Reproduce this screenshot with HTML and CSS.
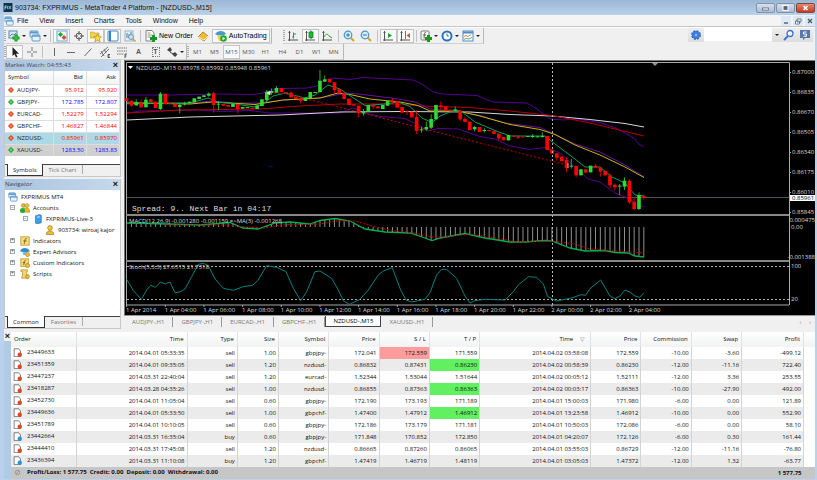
FILE: index.html
```html
<!DOCTYPE html>
<html lang="en">
<head>
<meta charset="utf-8">
<title>903734: FXPRIMUS - MetaTrader 4 Platform - [NZDUSD-,M15]</title>
<link rel="stylesheet" href="styles.css">
</head>
<body>
<svg class="defs" aria-hidden="true">
  <symbol id="windows" viewBox="0 0 12 12"><rect x="1" y="1" width="8" height="6" rx="1" fill="#e8f3fc" stroke="#5b9bd0"/><path d="M1 2.5h8" stroke="#5b9bd0" stroke-width="2"/><rect x="3" y="5" width="8" height="6" rx="1" fill="#e8f3fc" stroke="#5b9bd0"/><path d="M3 6h8" stroke="#5b9bd0" stroke-width="1.5"/></symbol>
  <symbol id="plus" viewBox="0 0 12 12"><rect x="1" y="1" width="8" height="7" fill="#d9e9f6" stroke="#5685ad"/><path d="M2 6l2-2 2 1 2-2" fill="none" stroke="#5685ad"/><path d="M8 4.500v7M4.500 8h7" stroke="#129a1c" stroke-width="3"/><path d="M8 5.500v5M5.500 8h5" stroke="#3fd34b" stroke-width="1"/></symbol>
  <symbol id="market" viewBox="0 0 12 12"><rect x="1" y="1" width="10" height="10" fill="#f3faff" stroke="#6ba5d8"/><path d="M2 4.500L4.500 2l2.500 2.500-2.500 2.500z" fill="#18a82a"/><path d="M5.500 7.500l2.500-2.500 2.500 2.500-2.500 2.500z" fill="#e04a20"/></symbol>
  <symbol id="cross" viewBox="0 0 12 12"><circle cx="6" cy="6" r="3" fill="none" stroke="#555"/><path d="M6 1v4M6 7v4M1 6h4M7 6h4" stroke="#555"/></symbol>
  <symbol id="nav" viewBox="0 0 12 12"><path d="M0 2h4l1 1h4v5H0z" fill="#f3cf57" stroke="#c09a32" stroke-width=".6"/><path d="M7.500 4l1.200 2.500 2.800.3-2 2 .5 2.900-2.500-1.300L5 11.700l.5-2.900-2-2 2.800-.3z" fill="#fbd84b" stroke="#b78a1d" stroke-width=".7"/></symbol>
  <symbol id="terminal" viewBox="0 0 12 12"><rect x="1" y="1" width="10" height="10" rx="1" fill="#fff" stroke="#3d84c6"/><path d="M3 1v10" stroke="#3d84c6" stroke-width="2"/></symbol>
  <symbol id="tester" viewBox="0 0 12 12"><rect x="1" y="1" width="8" height="10" fill="#e3eef6" stroke="#8ba8bd" stroke-width=".8"/><path d="M3 8V3m2 5V4m2 3V2" stroke="#557c9c"/><circle cx="7" cy="7" r="2.500" fill="#c8e2f4" stroke="#7296b1"/><path d="M9 9l2.500 2.500" stroke="#c99b2f" stroke-width="1.500"/></symbol>
  <symbol id="order" viewBox="0 0 12 12"><path d="M1 .5h6l2 2.500v8H1z" fill="#fff" stroke="#666" stroke-width=".8"/><path d="M2.500 3h3M2.500 5h5M2.500 7h3" stroke="#777" stroke-width=".8"/><path d="M8.500 5v7M5 8.500h7" stroke="#129a1c" stroke-width="2.800"/></symbol>
  <symbol id="book" viewBox="0 0 12 12"><path d="M1 7l5-5 5 4-4 5z" fill="#f0b934" stroke="#a97514" stroke-width=".8"/><path d="M1 7l6 3 4-4" fill="none" stroke="#fff1bd"/></symbol>
  <symbol id="auto" viewBox="0 0 12 12"><path d="M0 4c3-4 9-4 11 0l-3 1.500H3z" fill="#3c9bd8"/><path d="M2 5h7l-1 6H4z" fill="#f4cd45"/><circle cx="8.500" cy="8.500" r="3.300" fill="#1dab2b"/><path d="M7.500 7v3.200L10.300 8.600z" fill="#fff"/></symbol>
  <symbol id="bars" viewBox="0 0 12 12"><path d="M2.500 1v10M1 10h10M1.500 2.500h2" stroke="#555" fill="none"/><path d="M6.500 2.500v6M5 7h1.500M6.500 4H9" stroke="#1fa42d" fill="none"/></symbol>
  <symbol id="candle" viewBox="0 0 12 12"><path d="M2.500 1v10M1 10h10M1.500 2.500h2" stroke="#555" fill="none"/><path d="M7 .5V9" stroke="#0d7f1b"/><rect x="5" y="2" width="4" height="5.500" fill="#23b936" stroke="#0d7f1b" stroke-width=".8"/></symbol>
  <symbol id="line" viewBox="0 0 12 12"><path d="M2.500 1v10M1 10h10M1.500 2.500h2" stroke="#555" fill="none"/><path d="M3 7c2-4 4-3 5-1l3 2" stroke="#1fa42d" fill="none"/></symbol>
  <symbol id="zoomin" viewBox="0 0 12 12"><path d="M7.500 7.500l3.500 3.500" stroke="#d8a72e" stroke-width="2.200"/><circle cx="5" cy="5" r="3.800" fill="#d8edfb" stroke="#4a93cb" stroke-width="1.200"/><path d="M3 5h4M5 3v4" stroke="#2d7ab8"/></symbol>
  <symbol id="zoomout" viewBox="0 0 12 12"><path d="M7.500 7.500l3.500 3.500" stroke="#d8a72e" stroke-width="2.200"/><circle cx="5" cy="5" r="3.800" fill="#d8edfb" stroke="#4a93cb" stroke-width="1.200"/><path d="M3 5h4" stroke="#2d7ab8"/></symbol>
  <symbol id="scroll" viewBox="0 0 12 12"><path d="M2.500 1v10M1 10h10M1.500 2.500h2" stroke="#555" fill="none"/><path d="M6 3l4 2.500L6 8z" fill="#1fa42d"/></symbol>
  <symbol id="shift" viewBox="0 0 12 12"><path d="M2.500 1v10M1 10h10M1.500 2.500h2" stroke="#555" fill="none"/><path d="M6.500 1v8" stroke="#3883bd"/><path d="M11 3L7.500 5.500 11 8z" fill="#d2502b"/></symbol>
  <symbol id="indicator" viewBox="0 0 12 12"><rect x="1" y="1" width="8" height="9" rx="1" fill="#f5f5f5" stroke="#666" stroke-width=".8"/><path d="M6 2.500c-2-.5-1.500 2-2 6M3 5h3" stroke="#444" fill="none" stroke-width=".8"/><path d="M8.500 5v7M5 8.500h7" stroke="#129a1c" stroke-width="3"/></symbol>
  <symbol id="clock" viewBox="0 0 12 12"><circle cx="6" cy="6" r="4.500" fill="#fff" stroke="#2674c4" stroke-width="2"/><path d="M6 3.500V6h2" fill="none" stroke="#555" stroke-width=".9"/></symbol>
  <symbol id="template" viewBox="0 0 12 12"><rect x="1" y="1" width="10" height="10" fill="#fff" stroke="#4a8dc7"/><path d="M1 2.500h10" stroke="#4a8dc7" stroke-width="2"/><path d="M2 6.500l2-1 2 1 3-2" stroke="#d0603a" fill="none" stroke-width=".8"/><path d="M2 9.500l2-1 3 .5 3-1.500" stroke="#38a048" fill="none" stroke-width=".8"/></symbol>
  <symbol id="gear" viewBox="0 0 12 12"><circle cx="6" cy="6" r="4" fill="#3f7fdb" stroke="#2d68c6" stroke-width="1.800" stroke-dasharray="2 1.140"/><circle cx="6" cy="6" r="3.500" fill="#3f7fdb"/><circle cx="6" cy="6" r="1.200" fill="#8ab6f2"/></symbol>
  <symbol id="search" viewBox="0 0 12 12"><circle cx="7" cy="4.500" r="3" fill="#eef5ff" stroke="#3c6fcf" stroke-width="1.300"/><path d="M5 7l-4 4" stroke="#3c6fcf" stroke-width="1.800"/></symbol>
  <symbol id="chat" viewBox="0 0 12 12"><path d="M1 1h10v8H6l-2 2.500V9H1z" fill="#5777ad"/><path d="M7.500 3h-3v2h3v2.200h-3" fill="none" stroke="#fff"/></symbol>
  <symbol id="cursor" viewBox="0 0 12 12"><path d="M3.500 1v9l2-1.800L7 11.500l1.500-.7L7 7.700h3z" fill="#222"/></symbol>
  <symbol id="hair" viewBox="0 0 12 12"><path d="M6 1v4M6 7v4M1 6h4M7 6h4" stroke="#777"/></symbol>
  <symbol id="vline" viewBox="0 0 12 12"><path d="M6.500 2v8" stroke="#666"/></symbol>
  <symbol id="hline" viewBox="0 0 12 12"><path d="M2 6.500h8" stroke="#666"/></symbol>
  <symbol id="trend" viewBox="0 0 12 12"><path d="M2.500 10l7-7.500" stroke="#666"/></symbol>
  <symbol id="channel" viewBox="0 0 12 12"><path d="M1 8l8-7M2 11l8-8M2 5l3 5M5 3l2 4" stroke="#666" stroke-width=".9"/><path d="M11 8.500H9v3h2M9 10h1.500" stroke="#333" fill="none" stroke-width=".8"/></symbol>
  <symbol id="fibo" viewBox="0 0 12 12"><path d="M1 2h10M1 5h10M1 8h7" stroke="#777" stroke-dasharray="1.500 .7"/><path d="M11 8H9v4M9 10h1.500" stroke="#333" fill="none" stroke-width=".8"/></symbol>
  <symbol id="arrows" viewBox="0 0 12 12"><path d="M1 4l3-3 2 3-2 2zM6 8l3-2 2.500 2.500L9 11z" fill="#444"/><path d="M4 6l3 2" stroke="#444"/></symbol>
  <symbol id="up" viewBox="0 0 12 12"><path d="M6 0l6 6-6 6-6-6z" fill="#16a52b"/><path d="M6 3.500v5M3.500 6h5" stroke="#9df2a6" stroke-width="1.500"/></symbol>
  <symbol id="down" viewBox="0 0 12 12"><path d="M6 0l6 6-6 6-6-6z" fill="#dd3c16"/><path d="M6 3.500v5M3.500 6h5" stroke="#ffb18f" stroke-width="1.500"/></symbol>
  <symbol id="person" viewBox="0 0 12 12"><circle cx="6" cy="3.500" r="2.800" fill="#f1cb3a" stroke="#987317" stroke-width=".8"/><path d="M1.500 11.500c0-6 9-6 9 0z" fill="#e9bd2c" stroke="#987317" stroke-width=".8"/></symbol>
  <symbol id="people" viewBox="0 0 12 12"><circle cx="4" cy="3" r="2.300" fill="#e2ba2d" stroke="#987317" stroke-width=".6"/><circle cx="8.500" cy="3" r="2.300" fill="#f1cb3a" stroke="#987317" stroke-width=".6"/><path d="M3 11c0-7 9-7 9 0z" fill="#e9bd2c" stroke="#987317" stroke-width=".6"/><circle cx="3" cy="9" r="3" fill="#20ad32"/></symbol>
  <symbol id="server" viewBox="0 0 12 12"><path d="M3 2l5-1.500 2 1v9L5 12l-2-1z" fill="#3aa0e4" stroke="#1f6fae" stroke-width=".7"/><path d="M5 4l3-.8" stroke="#fff"/></symbol>
  <symbol id="func" viewBox="0 0 12 12"><rect x="1" y="1" width="10" height="10" fill="#f8de77" stroke="#be9632"/><path d="M8 3c-2.500-.5-1.800 3-3 6.500M4 6h4" fill="none" stroke="#6d5517"/></symbol>
  <symbol id="funcs" viewBox="0 0 12 12"><rect x="1" y="1" width="9" height="9" fill="#f8de77" stroke="#be9632"/><path d="M7 3c-2.500-.5-1.800 2-2.500 5.500M3.500 5.500h3" fill="none" stroke="#6d5517"/><circle cx="9" cy="9" r="2.500" fill="#f0bf35" stroke="#98721d" stroke-width=".7"/></symbol>
  <symbol id="hat" viewBox="0 0 12 12"><path d="M0 5c2-5 9-5 12 0L6 7z" fill="#2f8fcb"/><path d="M3 6.500h4l-1 3H4z" fill="#67b8e2"/><circle cx="9" cy="9" r="2.500" fill="#f0bf35" stroke="#98721d" stroke-width=".7"/></symbol>
  <symbol id="scroll-doc" viewBox="0 0 12 12"><path d="M1 1h8v2H8v6h2v2H2V9h1V3H1z" fill="#f6d565" stroke="#b58e2b" stroke-width=".8"/><circle cx="9" cy="9" r="2.300" fill="#f0bf35" stroke="#98721d" stroke-width=".7"/></symbol>
  <symbol id="sell" viewBox="0 0 12 12"><path d="M1.500 1h6l2.500 3v7.500H1.500z" fill="#fff" stroke="#555"/><circle cx="9" cy="9" r="2.900" fill="#df4622"/></symbol>
  <symbol id="buy" viewBox="0 0 12 12"><path d="M1.500 1h6l2.500 3v7.500H1.500z" fill="#fff" stroke="#555"/><circle cx="9" cy="9" r="2.900" fill="#2893d8"/></symbol>
</svg>

<div class="window">
  <header class="titlebar">
    <svg class="app-icon" viewBox="0 0 12 12" aria-hidden="true"><rect width="12" height="12" fill="#0e3550"/><path d="M2 9V4h2.500M2 6h2M5.500 4v4M7 4l3 4M10 4L7 8" stroke="#bfe0f0" fill="none"/></svg>
    <h1>903734: FXPRIMUS - MetaTrader 4 Platform - [NZDUSD-,M15]</h1>
    <div class="win-buttons">
      <button aria-label="Minimize"><svg viewBox="0 0 12 8"><rect x="3" y="4" width="6" height="2" fill="#fff" stroke="#556" stroke-width=".7"/></svg></button>
      <button aria-label="Maximize"><svg viewBox="0 0 12 8"><rect x="3.500" y="1.500" width="5" height="5" fill="#667" stroke="#fff"/></svg></button>
      <button class="close" aria-label="Close"><svg viewBox="0 0 12 8"><path d="M4 2l4 4M8 2L4 6" stroke="#fff" stroke-width="1.600"/></svg></button>
    </div>
  </header>

  <nav class="menubar">
    <svg class="icon" aria-hidden="true"><use href="#windows"/></svg>
    <button>File</button><button>View</button><button>Insert</button><button>Charts</button><button>Tools</button><button>Window</button><button>Help</button>
    <div class="child-buttons">
      <button aria-label="Minimize chart"><svg viewBox="0 0 10 10"><path d="M3 7h4" stroke="#456" stroke-width="1.300"/></svg></button>
      <button aria-label="Restore chart"><svg viewBox="0 0 10 10"><path d="M4 3h4v3H4zM2.500 5h4v3h-4z" fill="#fff" stroke="#567" stroke-width=".8"/></svg></button>
      <button aria-label="Close chart"><svg viewBox="0 0 10 10"><path d="M3 3l4 4M7 3L3 7" stroke="#456" stroke-width="1.200"/></svg></button>
    </div>
  </nav>

  <div class="toolbar main-tools">
    <div class="group">
      <i class="grip"></i>
      <button class="drop" aria-label="New chart"><svg class="icon"><use href="#plus"/></svg></button>
      <button class="drop" aria-label="Profiles"><svg class="icon"><use href="#windows"/></svg></button>
      <i class="sep"></i>
      <button class="on" aria-label="Market Watch"><svg class="icon"><use href="#market"/></svg></button>
      <button aria-label="Data Window"><svg class="icon"><use href="#cross"/></svg></button>
      <button class="on" aria-label="Navigator"><svg class="icon"><use href="#nav"/></svg></button>
      <button class="on" aria-label="Terminal"><svg class="icon"><use href="#terminal"/></svg></button>
      <button aria-label="Strategy Tester"><svg class="icon"><use href="#tester"/></svg></button>
      <i class="sep"></i>
      <button class="label"><svg class="icon" aria-hidden="true"><use href="#order"/></svg>New Order</button>
      <button aria-label="MetaEditor"><svg class="icon"><use href="#book"/></svg></button>
      <button class="label on"><svg class="icon" aria-hidden="true"><use href="#auto"/></svg>AutoTrading</button>
    </div>
    <div class="group">
      <i class="grip"></i>
      <button aria-label="Bar chart"><svg class="icon"><use href="#bars"/></svg></button>
      <button class="on" aria-label="Candlesticks"><svg class="icon"><use href="#candle"/></svg></button>
      <button aria-label="Line chart"><svg class="icon"><use href="#line"/></svg></button>
      <i class="sep"></i>
      <button aria-label="Zoom in"><svg class="icon"><use href="#zoomin"/></svg></button>
      <button aria-label="Zoom out"><svg class="icon"><use href="#zoomout"/></svg></button>
      <i class="sep"></i>
      <button class="on" aria-label="Auto scroll"><svg class="icon"><use href="#scroll"/></svg></button>
      <button class="on" aria-label="Chart shift"><svg class="icon"><use href="#shift"/></svg></button>
      <i class="sep"></i>
      <button class="drop" aria-label="Indicators"><svg class="icon"><use href="#indicator"/></svg></button>
      <button class="drop" aria-label="Periods"><svg class="icon"><use href="#clock"/></svg></button>
      <button class="drop" aria-label="Templates"><svg class="icon"><use href="#template"/></svg></button>
    </div>
    <form class="finder">
      <button type="button" aria-label="Search options"><svg class="icon"><use href="#gear"/></svg></button>
      <input type="text" aria-label="Search">
      <button type="button" class="caret" aria-label="Recent searches"></button>
      <button type="button" aria-label="Find"><svg class="icon"><use href="#search"/></svg></button>
      <button type="button" aria-label="Community"><svg class="icon"><use href="#chat"/></svg></button>
    </form>
  </div>

  <div class="toolbar">
    <div class="group">
      <i class="grip"></i>
      <button class="on" aria-label="Cursor"><svg class="icon"><use href="#cursor"/></svg></button>
      <button aria-label="Crosshair"><svg class="icon"><use href="#hair"/></svg></button>
      <i class="sep"></i>
      <button aria-label="Vertical line"><svg class="icon"><use href="#vline"/></svg></button>
      <button aria-label="Horizontal line"><svg class="icon"><use href="#hline"/></svg></button>
      <button aria-label="Trendline"><svg class="icon"><use href="#trend"/></svg></button>
      <button aria-label="Channel"><svg class="icon"><use href="#channel"/></svg></button>
      <button aria-label="Fibonacci"><svg class="icon"><use href="#fibo"/></svg></button>
      <button class="glyph" aria-label="Text">A</button>
      <button class="glyph" aria-label="Text label"><span>T</span></button>
      <button class="drop" aria-label="Arrows"><svg class="icon"><use href="#arrows"/></svg></button>
    </div>
    <div class="group periods">
      <i class="grip"></i>
      <button>M1</button><button>M5</button><button class="on">M15</button><button>M30</button><button>H1</button><button>H4</button><button>D1</button><button>W1</button><button>MN</button>
    </div>
  </div>

  <div class="workspace">
    <aside class="docks">
      <section class="dock">
        <h2>Market Watch: 04:55:43<button aria-label="Close Market Watch">×</button></h2>
        <table class="quotes">
          <thead><tr><th>Symbol</th><th>Bid</th><th>Ask</th></tr></thead>
          <tbody>
            <tr class="dn"><td><svg><use href="#down"/></svg>AUDJPY-</td><td>95.912</td><td>95.920</td></tr>
            <tr class="up"><td><svg><use href="#up"/></svg>GBPJPY-</td><td>172.785</td><td>172.807</td></tr>
            <tr class="dn"><td><svg><use href="#down"/></svg>EURCAD-</td><td>1.52279</td><td>1.52294</td></tr>
            <tr class="dn"><td><svg><use href="#down"/></svg>GBPCHF-</td><td>1.46827</td><td>1.46844</td></tr>
            <tr class="dn current"><td><svg><use href="#down"/></svg>NZDUSD-</td><td>0.85961</td><td>0.85970</td></tr>
            <tr class="up shaded"><td><svg><use href="#up"/></svg>XAUUSD-</td><td>1283.50</td><td>1283.83</td></tr>
          </tbody>
        </table>
        <div class="dock-tabs"><button class="active">Symbols</button><button>Tick Chart</button></div>
      </section>
      <section class="dock navigator">
        <h2>Navigator<button aria-label="Close Navigator">×</button></h2>
        <ul class="tree">
          <li><svg><use href="#windows"/></svg>FXPRIMUS MT4</li>
          <li class="l1"><b>−</b><svg><use href="#people"/></svg>Accounts</li>
          <li class="l2"><b>−</b><svg><use href="#server"/></svg>FXPRIMUS-Live-3</li>
          <li class="l3"><svg><use href="#person"/></svg>903734: wiroaj kajor</li>
          <li class="l1"><b>+</b><svg><use href="#func"/></svg>Indicators</li>
          <li class="l1"><b>+</b><svg><use href="#hat"/></svg>Expert Advisors</li>
          <li class="l1"><b>+</b><svg><use href="#funcs"/></svg>Custom Indicators</li>
          <li class="l1"><b>+</b><svg><use href="#scroll-doc"/></svg>Scripts</li>
        </ul>
        <div class="dock-tabs"><button class="active">Common</button><button>Favorites</button></div>
      </section>
    </aside>

    <main class="charts">
      <svg class="chart" viewBox="124 60 691 255" role="img" aria-label="NZDUSD M15 chart">
        <rect x="124" y="60" width="691" height="255" fill="#777"/>
        <rect x="125" y="61" width="690" height="254" fill="#000"/>
        <path d="M126.500 305V62.500H789.500V305M126 305H789" fill="none" stroke="#aaa"/>
        <path d="M126 215H789M126 261H789" stroke="#888" stroke-width="2"/>
        <path d="M127 197.500H789" stroke="#4c5560"/>
        <path d="M652 63h6l-3 3z" fill="#8296ac"/>
        <path d="M269 166.500h4" stroke="#00008b"/>
        <g fill="none" stroke-width="1">
          <polyline stroke="#560093" points="127,95 170,95 217,94 253,94.500 263,93 277,88.700 307,88 317,86 323,80.500 333,78 350,79.500 363,77.500 413,80 422,84 433,92 443,94 477,95.500 493,102 527,103 537,109 550,119 563,120 577,119 600,122.500 617,128.500 627,134 635,139 638,143.500 644,147"/>
          <polyline stroke="#560093" points="127,113 140,111 200,110 220,111.500 250,110.500 270,113 340,113 353,108 365,113 380,116.500 405,118.500 418,125 428,131 438,128.500 458,129 480,136.500 495,139 510,146 530,149.500 545,147.500 560,153 575,167 588,179 600,182 615,193 630,199 637,205 644,207"/>
          <polyline stroke="#d8d8d8" points="127,120 190,117 280,115 340,112 400,111.500 470,112 510,114.500 552,116 590,119.500 625,123.500 644,127"/>
          <polyline stroke="#b40000" points="127,113 180,110 260,109 300,106 340,104 400,104 420,106 470,107.500 510,111 552,115.500 590,123 615,129 644,136"/>
          <polyline stroke="#6a12a4" points="127,104 190,103 212,101 235,103 260,103 285,100 320,98 347,93 363,94.500 395,98.500 415,102 430,109 455,111 480,115.500 505,123 540,127.500 552,133 575,144 600,152 625,165 644,177"/>
          <polyline stroke="#c6b800" points="127,103 190,104 212,102 255,104.500 283,100 320,98 338,93 350,94.500 370,99 400,102 418,105.500 430,111 458,111 480,116 510,124.500 540,129.500 555,134.500 575,145 600,155 625,167 644,177.500"/>
          <polyline stroke="#00a060" points="127,102 150,103 190,103 208,98 218,102 235,104 255,107 263,104 273,96 285,93 305,98 315,95 328,85 340,89 352,97 365,105.500 385,104 398,102 410,106.500 422,118 432,122.500 440,116 450,112 460,110.500 475,122 495,130.500 510,136 545,136 555,144 575,159 585,167 600,167 612,177 625,183 635,195 644,196"/>
          <path d="M270 93l15 .5 282 71.500" stroke="#c80000" stroke-dasharray="2 2"/>
        </g>
        <g id="candles"></g>
        <path d="M267 93l3-2v4zM568 163v5" fill="#eee" stroke="#ddd" stroke-width=".8"/>
        <g id="histogram" stroke="#909090"></g>
        <polyline id="macd" fill="none" stroke="#00b050" stroke-width="1.300" points="127,223 150,223.500 200,225 230,222.500 243,228 258,229 275,223 290,222 310,224 320,220.500 335,218.500 350,221 365,229 385,232 410,233 422,237 432,240.500 440,238 465,233.500 485,238 510,242 525,242 545,240.500 552,241 570,248 585,251 605,250.500 615,252.500 628,253 635,256 644,257"/>
        <polyline fill="none" stroke="#c80000" stroke-dasharray="2 1.500" points="165,225 200,225 230,225 245,227 265,228 280,225 320,224 335,221 355,221 375,227 395,231 415,233 430,237 445,237 470,234 495,238 520,242 552,241 575,244 590,249 615,251 644,253"/>
        <path d="M127 266.500H789M127 299.500H789" stroke="#aaa" stroke-dasharray="2 2"/>
        <path d="M552.500 63V305" stroke="#b8b8b8" stroke-dasharray="2 2"/>
        <g fill="none" stroke="#0b7f82" stroke-width="3">
          <polyline transform="translate(120 210) scale(.3333)" points="20,208 40,242 64,268 80,240 92,226 106,232 122,216 136,222 150,216 165,248 180,246 195,237 215,200 235,163 250,160 265,167 285,207 310,235 340,241 370,230 398,226 413,212 440,167 470,172 498,185 520,235 542,272 560,245 585,185 600,183 635,205 655,240 670,272 688,283 720,268 745,240 775,195 790,183 817,173 840,235 858,270 875,276 915,268 930,248 950,195 965,178 980,178 1010,205 1035,258 1050,279"/>
          <polyline transform="translate(465 210) scale(.3333)" points="15,279 30,272 60,268 120,270 145,245 160,225 190,200 215,202 235,222 248,260 275,273 320,264 348,254 362,256 375,236 407,210 435,258 450,266 465,258 480,240 495,246 510,258 524,262 537,248"/>
        </g>
        <path d="M128 66h5l-2.500 3z" fill="#fff"/>
        <g class="labels">
          <text x="136" y="70">NZDUSD-,M15 0.85978 0.85992 0.85948 0.85961</text>
          <text x="129" y="223">MACD(12,26,9) -0.001280 -0.001159 =&gt;MA(3) -0.001268</text>
          <text x="129" y="269">Stoch(5,3,3) 27.6515 21.7318</text>
          <text x="792" y="74">0.87000</text><text x="792" y="94">0.86835</text><text x="792" y="114">0.86670</text><text x="792" y="134">0.86505</text><text x="792" y="154">0.86340</text><text x="792" y="174">0.86175</text><text x="792" y="194">0.86010</text><text x="792" y="214">0.85845</text>
          <text class="end" x="815" y="222">0.000475</text><text x="791" y="229">0.00</text><text class="end" x="815" y="259">-0.001388</text>
          <text x="791" y="268">100</text><text x="791" y="301">20</text>
        </g>
        <rect x="790" y="195" width="25" height="6" fill="#fff"/>
        <text class="price" x="792" y="200">0.85961</text>
        <g id="times" class="labels"></g>
        <text class="comment" x="132" y="211">Spread: 9.. Next Bar in 04:17</text>
      </svg>
      <div class="chart-tabs">
        <button>AUDJPY-,H1</button><button>GBPJPY-,H1</button><button>EURCAD-,H1</button><button>GBPCHF-,H1</button><button class="active">NZDUSD-,M15</button><button>XAUUSD-,H1</button>
        <span class="pager"><button aria-label="Previous">‹</button><button aria-label="Next">›</button></span>
      </div>
    </main>
  </div>

  <section class="terminal">
    <div class="side"><button aria-label="Close Terminal">×</button></div>
    <table class="orders">
      <colgroup><col class="c-order"><col class="c-time"><col class="c-std"><col class="c-size"><col class="c-std"><col class="c-std"><col class="c-std"><col class="c-std"><col class="c-time"><col class="c-std"><col class="c-std"><col class="c-std"><col class="c-profit"><col></colgroup>
      <thead><tr><th>Order</th><th>Time</th><th>Type</th><th>Size</th><th>Symbol</th><th>Price</th><th>S / L</th><th>T / P</th><th class="sorted">Time<i>▽</i></th><th>Price</th><th>Commission</th><th>Swap</th><th>Profit</th><th></th></tr></thead>
      <tbody>
        <tr><td><svg><use href="#sell"/></svg>23449633</td><td>2014.04.01 05:33:35</td><td>sell</td><td>1.00</td><td>gbpjpy-</td><td>172.041</td><td class="sl">172.559</td><td>171.559</td><td>2014.04.02 03:58:08</td><td>172.559</td><td>-10.00</td><td>-3.60</td><td>-499.12</td><td></td></tr>
        <tr><td><svg><use href="#sell"/></svg>23451359</td><td>2014.04.01 09:35:05</td><td>sell</td><td>1.20</td><td>nzdusd-</td><td>0.86832</td><td>0.87431</td><td class="tp">0.86230</td><td>2014.04.02 00:58:39</td><td>0.86230</td><td>-12.00</td><td>-11.16</td><td>722.40</td><td></td></tr>
        <tr><td><svg><use href="#sell"/></svg>23447237</td><td>2014.03.31 22:40:04</td><td>sell</td><td>1.20</td><td>eurcad-</td><td>1.52344</td><td>1.53044</td><td>1.51644</td><td>2014.04.02 00:05:12</td><td>1.52111</td><td>-12.00</td><td>3.36</td><td>253.55</td><td></td></tr>
        <tr><td><svg><use href="#sell"/></svg>23418287</td><td>2014.03.28 04:35:26</td><td>sell</td><td>1.00</td><td>nzdusd-</td><td>0.86855</td><td>0.87363</td><td class="tp">0.86363</td><td>2014.04.02 00:03:17</td><td>0.86363</td><td>-10.00</td><td>-27.90</td><td>492.00</td><td></td></tr>
        <tr><td><svg><use href="#sell"/></svg>23452730</td><td>2014.04.01 11:05:04</td><td>sell</td><td>0.60</td><td>gbpjpy-</td><td>172.190</td><td>173.193</td><td>171.189</td><td>2014.04.01 15:00:03</td><td>171.980</td><td>-6.00</td><td>0.00</td><td>121.89</td><td></td></tr>
        <tr><td><svg><use href="#sell"/></svg>23449636</td><td>2014.04.01 05:33:50</td><td>sell</td><td>1.00</td><td>gbpchf-</td><td>1.47400</td><td>1.47912</td><td class="tp">1.46912</td><td>2014.04.01 13:23:58</td><td>1.46912</td><td>-10.00</td><td>0.00</td><td>552.90</td><td></td></tr>
        <tr><td><svg><use href="#sell"/></svg>23451789</td><td>2014.04.01 10:10:05</td><td>sell</td><td>0.60</td><td>gbpjpy-</td><td>172.186</td><td>173.179</td><td>171.181</td><td>2014.04.01 10:50:03</td><td>172.086</td><td>-6.00</td><td>0.00</td><td>58.10</td><td></td></tr>
        <tr><td><svg><use href="#buy"/></svg>23442664</td><td>2014.03.31 16:35:04</td><td>buy</td><td>0.60</td><td>gbpjpy-</td><td>171.848</td><td>170.852</td><td>172.850</td><td>2014.04.01 04:20:07</td><td>172.126</td><td>-6.00</td><td>0.30</td><td>161.44</td><td></td></tr>
        <tr><td><svg><use href="#sell"/></svg>23444410</td><td>2014.03.31 17:45:08</td><td>sell</td><td>1.20</td><td>nzdusd-</td><td>0.86665</td><td>0.87260</td><td>0.86065</td><td>2014.04.01 03:55:03</td><td>0.86729</td><td>-12.00</td><td>-11.16</td><td>-76.80</td><td></td></tr>
        <tr><td><svg><use href="#buy"/></svg>23436394</td><td>2014.03.31 11:10:08</td><td>buy</td><td>1.20</td><td>gbpchf-</td><td>1.47419</td><td>1.46719</td><td>1.48119</td><td>2014.04.01 03:05:03</td><td>1.47372</td><td>-12.00</td><td>1.32</td><td>-63.77</td><td></td></tr>
      </tbody>
      <tfoot><tr><td colspan="12"><svg viewBox="0 0 12 12"><circle cx="6" cy="6" r="3" fill="none" stroke="#888"/><path d="M4 8l4-4" stroke="#888"/></svg>Profit/Loss: 1 577.75&#160; Credit: 0.00&#160; Deposit: 0.00&#160; Withdrawal: 0.00</td><td>1 577.75</td><td></td></tr></tfoot>
    </table>
  </section>
</div>
<script src="chart.js"></script>
</body>
</html>
```
FILE: styles.css
```css
:root {
  --ui: "Open Sans", "Noto Sans", sans-serif;
  --face: #f0f0f0;
  --line: #b8b8b8;
}
* { box-sizing: border-box; }
body { margin: 0; font: 500 6px/10px var(--ui); color: #111; background: #b9d1ea; }
button { margin: 0; padding: 0; border: 0; background: none; font: inherit; color: inherit; }
svg { display: block; }
.defs { width: 0; height: 0; position: absolute; }
.icon { width: 12px; height: 12px; flex: none; }
.window { min-height: 100vh; padding: 0 2px 0 4px; background: linear-gradient(#9bb7d5, #b9d1ea 15px); }

.titlebar { display: flex; align-items: center; height: 15px; }
.titlebar h1 { flex: 1; margin: 0 0 0 2px; font: 7px/12px "Liberation Sans", sans-serif; color: #111; }
.app-icon { width: 10px; height: 9px; margin-left: -1px; }
.win-buttons { display: flex; align-self: flex-start; padding-top: 3px; gap: 1px; }
.win-buttons button { width: 19px; height: 10px; border: 1px solid #7d93ae; border-radius: 2px; background: linear-gradient(#d5e1ee, #a9bdd3); }
.win-buttons svg { width: 100%; height: 8px; }
.win-buttons .close { background: linear-gradient(#e08a78, #c33d20); border-color: #84453c; }

.menubar { display: flex; align-items: center; gap: 11px; height: 12px; background: #f4f4f4; font: 7px/10px "Liberation Sans", sans-serif; border-bottom: 1px solid #c4c4c4; }
.menubar .icon { width: 10px; height: 10px; margin-right: -8px; }
.child-buttons { display: flex; margin-left: auto; gap: 2px; }
.child-buttons button { width: 10px; height: 10px; background: #dce9f5; }

.toolbar { display: flex; height: 16px; background: var(--face); }
.main-tools { height: 17px; border-top: 1px solid #fff; }
.group { display: flex; align-items: center; padding-right: 1px; border-right: 1px solid var(--line); border-bottom: 1px solid #d2d2d2; }
.main-tools .group:first-child { margin-right: 11px; }
.toolbar button { display: flex; align-items: center; justify-content: center; width: 17px; height: 14px; }
.toolbar button.on { background: #f9f9f9; border: 1px solid #c4c4c4; }
.toolbar .drop { width: 21px; }
.toolbar .drop::after, .caret::after { content: ""; margin-left: 2px; border: 2px solid transparent; border-top-color: #222; border-bottom-width: 0; }
.toolbar .label { width: auto; gap: 2px; padding: 0 2px; font: 7px/10px "Liberation Sans", sans-serif; white-space: nowrap; color: #000; }
.grip { width: 2px; height: 11px; background: repeating-linear-gradient(#aaa 0 1px, #eee 1px 2px); }
.sep { width: 1px; height: 12px; margin: 0 2px; background: #c2c2c2; }
.toolbar .glyph { font: bold 7px/8px "Liberation Sans", sans-serif; color: #555; }
.glyph span { width: 8px; border: 1px dotted #777; }
.periods { color: #555; }
.finder { display: flex; margin: 0 2px 2px auto; }
.finder button { width: 16px; background: linear-gradient(#eee, #ddd); }
.finder button.caret { width: 9px; }
.caret::after { margin: 0; }
.finder input { width: 68px; height: 13px; padding: 0 2px; border: 0; background: #fff; font: inherit; }

.workspace { display: grid; grid-template-columns: 120px 1fr; background: var(--face); }
.docks { display: flex; flex-direction: column; gap: 2px; padding-right: 3px; }
.dock { display: flex; flex-direction: column; border: 1px solid #c8c8c8; background: #fff; border-top: 0; }
.dock h2 { display: flex; justify-content: space-between; margin: 0; padding: 0 2px 0 0; font: 500 6px/11px var(--ui); color: #445; background: linear-gradient(90deg, #a9c3de, #c6d9ed); }
.dock h2 button, .side button { font: bold 9px/9px "Liberation Sans", sans-serif; color: #111; }
.quotes { width: 100%; border-collapse: collapse; margin-bottom: 8px; }
.quotes th { height: 13px; padding: 0 3px; text-align: right; font-weight: 500; border-right: 1px solid #ddd; background: linear-gradient(#fff, #f1f2f3); }
.quotes td { height: 12px; padding: 0 2px; text-align: right; border: solid #ddd; border-width: 1px 1px 0 0; line-height: 10px; }
.quotes tr > :first-child { width: 42%; text-align: left; color: #222; }
.quotes svg, .orders svg { display: inline-block; vertical-align: middle; }
.quotes svg { width: 6px; height: 6px; margin: 0 3px 1px 1px; }
.dn { color: #f00; }
.up { color: #00f; }
.current { background: #add8e6; }
.shaded { background: #d0d0d0; }
.dock-tabs { display: flex; height: 12px; background: var(--face); border-top: 1px solid #444; color: #777; }
.dock-tabs button { padding: 0 6px; border-right: 1px solid #aaa; height: 9px; }
.dock-tabs .active { height: 12px; margin: -1px 0 0 2px; padding: 0 5px; background: #fff; border: 1px solid #333; border-top: 0; color: #222; }
.navigator { flex: 1; }
.tree { flex: 1; margin: 0; padding: 1px 0 0 3px; list-style: none; overflow: hidden; }
.tree li { display: flex; align-items: center; gap: 3px; height: 11px; white-space: nowrap; }
.tree svg { width: 10px; height: 10px; flex: none; }
.tree b { width: 5px; height: 5px; border: 1px solid #9aa; font: 5px/3px var(--ui); text-align: center; color: #336; }
.tree .l1 { padding-left: 2px; }
.tree .l1 b, .tree .l2 b { margin-right: 2px; }
.tree .l2 { padding-left: 15px; }
.tree .l3 { padding-left: 37px; }

.charts { min-width: 0; }
.chart { width: 100%; height: auto; }
.labels, .price { font: 500 6px var(--ui); fill: #ddd; }
.price { fill: #000; }
.end { text-anchor: end; }
.comment { font: 8px "Liberation Mono", monospace; fill: #ddd; }
.chart-tabs { display: flex; height: 14px; padding-top: 1px; color: #777; border-top: 1px solid #999; }
.chart-tabs button { height: 10px; padding: 0 8px; border-right: 1px solid #999; }
.chart-tabs .active { height: 11px; margin-top: -1px; padding: 0 7px; color: #000; background: #fff; border: 1px solid #444; border-top: 0; }
.pager { margin-left: auto; }
.pager button { padding: 0 4px; border: 0; }

.terminal { display: grid; grid-template-columns: 7px 1fr; background: #fff; border-top: 3px solid var(--face); }
.side { background: #b0cbe6; }
.side button { display: block; background: var(--face); width: 7px; }
.orders { width: 100%; table-layout: fixed; border-collapse: collapse; line-height: 9px; }
.c-order { width: 8.1%; }
.c-time { width: 13.8%; }
.c-size { width: 5.1%; }
.c-std { width: 6.26%; }
.c-profit { width: 7.7%; }
.orders th { height: 15px; padding: 0 3px; text-align: right; font-weight: 500; border-right: 1px solid #e2e2e2; background: linear-gradient(#fff, #f1f2f3); }
.orders td { height: 12px; padding: 0 2px; text-align: right; border-right: 1px solid #d4d4d4; white-space: nowrap; }
.orders tr > :first-child { text-align: left; }
.orders svg { width: 9px; height: 9px; margin-right: 5px; }
.orders tbody tr:nth-child(even) td:not(:last-child) { background: #ebebeb; }
.orders tbody td.sl { background: #ff9c9c; }
.orders tbody tr:nth-child(n) td.tp { background: #60f060; }
.orders .sorted i { margin: 0 2px 0 7px; font-style: normal; color: #888; }
.orders tfoot td { background: #c6c6c6; border: 0; font-weight: 700; }
.orders td:last-child, .orders th:last-child { border: 0; }
```
FILE: chart.js
```js
// Bars of the main chart: direction, body top, body bottom, then optional wick top and bottom,
// all in thirds of a chart unit below the top edge.
const bars = `r115,123 r123,137,120,141 g126,136,118,138 r128,142,118,143 g119,142,111,142 r118,126 r125,144 g101,147,96,150
r101,132 r128,131 r131,141 g135,141,130,160 g130,133,125,137 g125,130 g115,127 g110,117 g106,111 g101,107,97,110
r100,135,95,158 g131,134,124,151 r132,137 r135,140 g131,141 r133,147,132,160 g141,146 g141,144 r143,146 g136,147
g118,138 g95,120,90,125 g93,99,85,105 g84,98,78,99 r84,96 r96,99 r98,112,94,113 r110,117 r116,123,113,130 g113,123
g96,115 g96,99 g62,96,30,98 g58,65,46,66 r57,67 r67,90,66,100 r87,100 r98,117 r116,135 r133,137 r137,160,136,172
g153,160,147,167 g135,155 r135,140,130,148 r139,145 g135,147 g123,137 r122,125,115,132 r123,143 r141,158
r154,157,150,165 r155,172 r171,213,150,222 g208,211,200,218 g201,208,185,212 g177,203,163,207 g135,178
r136,141,124,148 r139,152 r149,153 g148,152,140,154 r152,178,150,182 r177,186,170,187 r185,210 g201,208,197,214
r201,216 g210,213,205,218 r210,213 r213,222 r221,235,220,241 r231,241 g225,241 r227,230 r229,233,226,237 r229,232
g228,231 g228,231,222,234 g229,232 g228,231,217,233 r228,270 r269,281 r280,293,279,302 r290,304 r300,324,292,336
g317,320,297,326 r318,346,317,352 g328,346 r328,338 g317,337 r317,323,312,325 r323,335,320,350 r333,346
r346,376,340,384 r374,382,370,391 g377,380,372,405 g362,380,352,390 r362,427,357,432 r425,447,413,451
g405,447,397,450 r408,413,403,419`.split(/\s+/);

const NS = "http://www.w3.org/2000/svg";
function add(parent, name, attrs, text) {
  const el = document.createElementNS(NS, name);
  for (const key in attrs) el.setAttribute(key, attrs[key]);
  if (text) el.textContent = text;
  parent.appendChild(el);
}
const barX = i => 126.6 + 4.834 * i;
const y = v => 60 + v / 3;

const candles = document.getElementById("candles");
bars.forEach((bar, i) => {
  const color = bar[0] === "r" ? "#ff0000" : "#32d732";
  const [top, bottom, high = top, low = bottom] = bar.slice(1).split(",").map(Number);
  add(candles, "path", { d: `M${barX(i)} ${y(high)}V${y(low)}`, stroke: color, "stroke-width": 0.8 });
  add(candles, "rect", { x: barX(i) - 1.8, y: y(top), width: 3.6, height: Math.max(1, (bottom - top) / 3), fill: color });
});

// The histogram runs from the zero level to the signal line.
const line = document.getElementById("macd").getAttribute("points").split(" ").map(p => p.split(",").map(Number));
const histogram = document.getElementById("histogram");
bars.forEach((_, i) => {
  const x = barX(i);
  const next = line.findIndex(p => p[0] >= x);
  const k = next === -1 ? line.length - 1 : Math.max(1, next);
  const [x0, y0] = line[k - 1], [x1, y1] = line[k];
  add(histogram, "path", { d: `M${x} 227V${y0 + (y1 - y0) * (x - x0) / (x1 - x0)}` });
});

const times = document.getElementById("times");
["1 Apr 2014", "1 Apr 04:00", "1 Apr 06:00", "1 Apr 08:00", "1 Apr 10:00", "1 Apr 12:00", "1 Apr 14:00", "1 Apr 16:00",
 "1 Apr 18:00", "1 Apr 20:00", "1 Apr 22:00", "2 Apr 00:00", "2 Apr 02:00", "2 Apr 04:00"].forEach((label, i) => {
  const x = 126.6 + 38.67 * i;
  add(times, "path", { d: `M${x} 305v2`, stroke: "#aaa" });
  add(times, "text", { x: x - 0.6, y: 312 }, label);
});
[72, 92, 112, 132, 152, 172, 192, 212].forEach(v => add(times, "path", { d: `M789 ${v + 0.5}h2`, stroke: "#aaa" }));
```
